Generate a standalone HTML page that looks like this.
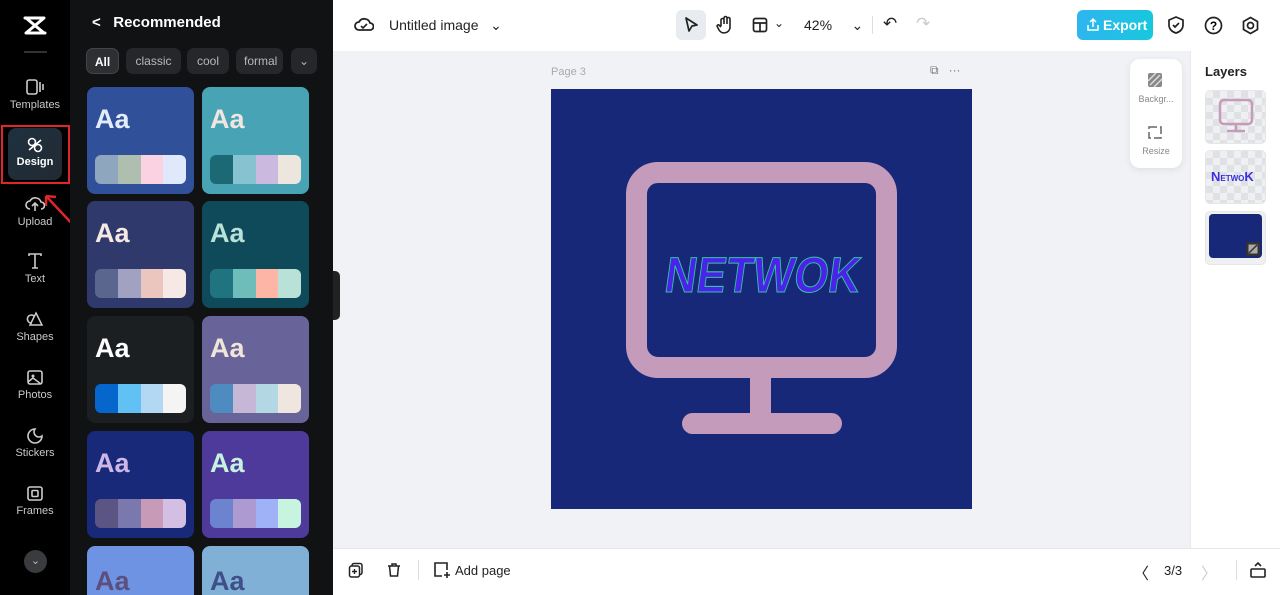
<!DOCTYPE html>
<html style="width:1280px;height:595px;overflow:hidden"><head><meta charset="utf-8"><style>
*{box-sizing:border-box;margin:0;padding:0}
body{width:1280px;height:595px;overflow:hidden;font-family:"Liberation Sans",sans-serif;background:#f0f2f5;position:relative}
.abs{position:absolute}
.side{left:0;top:0;width:70px;height:595px;background:#000}
.nav{position:absolute;left:0;width:70px;text-align:center;color:#c9c9c9;font-size:11px}
.nav svg{display:block;margin:0 auto 3px}
.panel{left:70px;top:0;width:263px;height:595px;background:#111214}
.chip{position:absolute;top:48px;height:26px;border-radius:7px;background:#26272b;color:#b8b8b8;font-size:12px;line-height:26px;text-align:center}
.card{position:absolute;width:107px;height:107px;border-radius:8px;overflow:hidden}
.card .aa{position:absolute;left:8px;top:17px;font-size:27px;font-weight:bold}
.card .pal{position:absolute;left:8px;top:68px;width:91px;height:29px;border-radius:6px;overflow:hidden;display:flex}
.card .pal i{flex:1}
.top{left:333px;top:0;width:947px;height:51px;background:#fff}
.bot{left:333px;top:548px;width:947px;height:47px;background:#fff;border-top:1px solid #e5e7eb}
.right{left:1190px;top:51px;width:90px;height:497px;background:#fff;border-left:1px solid #e8e8e8}
.th{position:absolute;left:1205px;width:61px;height:54px;border-radius:5px;background-color:#eef0f2;
background-image:linear-gradient(45deg,#dfe1e4 25%,transparent 25%,transparent 75%,#dfe1e4 75%),linear-gradient(45deg,#dfe1e4 25%,transparent 25%,transparent 75%,#dfe1e4 75%);background-size:14px 14px;background-position:0 0,7px 7px;border:1px solid #e6e6e6}
</style></head><body>
<div class="abs side"></div>
<svg class="abs" style="left:23px;top:15px" width="24" height="22" viewBox="0 0 24 22"><path d="M2 3h19L3 18h19M3 3l18 15" stroke="#fff" stroke-width="3" fill="none" stroke-linejoin="round" stroke-linecap="round"/></svg>
<div class="abs" style="left:24px;top:51px;width:23px;height:2px;background:#333"></div>
<div class="nav" style="top:78px"><svg width="20" height="18" viewBox="0 0 20 18"><rect x="2" y="2" width="10" height="14" rx="2" stroke="#ccc" stroke-width="1.6" fill="none"/><path d="M15 4v10M18 6v6" stroke="#ccc" stroke-width="1.6"/></svg>Templates</div>
<div class="abs" style="left:1px;top:125px;width:69px;height:59px;border:2px solid #e0262b"></div>
<div class="abs" style="left:8px;top:128px;width:54px;height:52px;border-radius:8px;background:linear-gradient(135deg,#1e3140,#222a33)"></div>
<div class="nav" style="top:137px;color:#fff;font-weight:bold"><svg width="18" height="16" viewBox="0 0 18 16"><circle cx="6" cy="5" r="3.5" stroke="#fff" stroke-width="1.6" fill="none"/><circle cx="12" cy="11" r="3.5" stroke="#fff" stroke-width="1.6" fill="none"/><path d="M3 13l12-10" stroke="#fff" stroke-width="1.6"/></svg>Design</div>
<svg class="abs" style="left:40px;top:188px" width="40" height="44"><path d="M36 40L6 8M6 8l0 10M6 8l10 1" stroke="#e0262b" stroke-width="2.4" fill="none"/></svg>
<div class="nav" style="top:195px"><svg width="20" height="18" viewBox="0 0 20 18"><path d="M5 14a4 4 0 010-8 6 6 0 0111 1 3.5 3.5 0 010 7M10 16V9M7 11l3-3 3 3" stroke="#ccc" stroke-width="1.6" fill="none"/></svg>Upload</div>
<div class="nav" style="top:252px"><svg width="18" height="18" viewBox="0 0 18 18"><path d="M3 4V2h12v2M9 2v14M6 16h6" stroke="#ccc" stroke-width="1.6" fill="none"/></svg>Text</div>
<div class="nav" style="top:311px"><svg width="18" height="17" viewBox="0 0 18 17"><path d="M10 2l6 12H4z M8 5a4 4 0 10-2 7" stroke="#ccc" stroke-width="1.5" fill="none"/></svg>Shapes</div>
<div class="nav" style="top:369px"><svg width="18" height="17" viewBox="0 0 18 17"><rect x="2" y="2" width="14" height="13" rx="2" stroke="#ccc" stroke-width="1.6" fill="none"/><circle cx="7" cy="7" r="1.5" fill="#ccc"/><path d="M2 13l5-4 8 6" stroke="#ccc" stroke-width="1.5" fill="none"/></svg>Photos</div>
<div class="nav" style="top:427px"><svg width="18" height="17" viewBox="0 0 18 17"><path d="M9 2a7 7 0 107 7 5 5 0 01-7-7z" stroke="#ccc" stroke-width="1.6" fill="none"/></svg>Stickers</div>
<div class="nav" style="top:485px"><svg width="18" height="17" viewBox="0 0 18 17"><rect x="2" y="2" width="14" height="13" rx="2" stroke="#ccc" stroke-width="1.6" fill="none"/><rect x="6" y="5.5" width="6" height="6" rx="1" stroke="#ccc" stroke-width="1.6" fill="none"/></svg>Frames</div>
<div class="abs" style="left:24px;top:550px;width:23px;height:23px;border-radius:50%;background:#3a3b3f;color:#bbb;font-size:11px;text-align:center;line-height:23px">⌄</div>

<div class="abs panel"></div>
<div class="abs" style="left:92px;top:14px;color:#fff;font-size:15px;font-weight:bold">&lt;&nbsp;&nbsp;&nbsp;Recommended</div>
<div class="chip" style="left:86px;width:33px;background:#2e2f33;border:1px solid #444;color:#fff;font-weight:bold">All</div>
<div class="chip" style="left:126px;width:55px">classic</div>
<div class="chip" style="left:187px;width:42px">cool</div>
<div class="chip" style="left:236px;width:47px;text-align:left;padding-left:8px;overflow:hidden">formal</div>
<div class="chip" style="left:291px;width:26px">⌄</div>

<div class="card" style="left:87px;top:87px;background:#31509a"><div class="aa" style="color:#e3ecfb">Aa</div><div class="pal"><i style="background:#8ea6be"></i><i style="background:#aebfb0"></i><i style="background:#fbd2e2"></i><i style="background:#e0e9fb"></i></div></div>
<div class="card" style="left:202px;top:87px;background:#48a3b5"><div class="aa" style="color:#efe7df">Aa</div><div class="pal"><i style="background:#1c6875"></i><i style="background:#87c2d0"></i><i style="background:#cbb9e0"></i><i style="background:#ede6df"></i></div></div>
<div class="card" style="left:87px;top:201px;background:#30396b"><div class="aa" style="color:#f6e8e3">Aa</div><div class="pal"><i style="background:#5b668f"></i><i style="background:#a1a2c1"></i><i style="background:#ebc6be"></i><i style="background:#f6e9e5"></i></div></div>
<div class="card" style="left:202px;top:201px;background:#0e4a5a"><div class="aa" style="color:#b9e1d8">Aa</div><div class="pal"><i style="background:#1f7480"></i><i style="background:#6fbdbb"></i><i style="background:#fdb6a6"></i><i style="background:#b8e1d8"></i></div></div>
<div class="card" style="left:87px;top:316px;background:#1b1f22"><div class="aa" style="color:#fff">Aa</div><div class="pal"><i style="background:#0566cd"></i><i style="background:#62c1f4"></i><i style="background:#b3d8f4"></i><i style="background:#f4f4f4"></i></div></div>
<div class="card" style="left:202px;top:316px;background:#68649a"><div class="aa" style="color:#efe5d9">Aa</div><div class="pal"><i style="background:#4d8bc0"></i><i style="background:#c6b7d6"></i><i style="background:#b3d8e3"></i><i style="background:#efe7df"></i></div></div>
<div class="card" style="left:87px;top:431px;background:#18297a"><div class="aa" style="color:#cdb7e4">Aa</div><div class="pal"><i style="background:#5b5584"></i><i style="background:#7a78ac"></i><i style="background:#c79ab8"></i><i style="background:#d3bfe4"></i></div></div>
<div class="card" style="left:202px;top:431px;background:#4e3a9b"><div class="aa" style="color:#c5f3e0">Aa</div><div class="pal"><i style="background:#6c84d0"></i><i style="background:#ad9ad0"></i><i style="background:#9fb2f7"></i><i style="background:#c7f4df"></i></div></div>
<div class="card" style="left:87px;top:546px;height:49px;border-radius:8px 8px 0 0;background:#6f93e3"><div class="aa" style="color:#5a4f7d;top:20px">Aa</div></div>
<div class="card" style="left:202px;top:546px;height:49px;border-radius:8px 8px 0 0;background:#80b0d5"><div class="aa" style="color:#3f4f89;top:20px">Aa</div></div>
<div class="abs" style="left:333px;top:271px;width:7px;height:49px;background:#222;border-radius:0 5px 5px 0"></div>

<div class="abs top"></div>
<svg class="abs" style="left:354px;top:15px" width="20" height="18" viewBox="0 0 20 18"><path d="M5 15a4 4 0 010-8 6 6 0 0111 1 3.5 3.5 0 010 7z" stroke="#222" stroke-width="1.8" fill="none"/><path d="M7 11l2 2 4-4" stroke="#222" stroke-width="1.6" fill="none"/></svg>
<div class="abs" style="left:389px;top:17px;font-size:14px;color:#222">Untitled image&nbsp;&nbsp;&nbsp;⌄</div>
<div class="abs" style="left:676px;top:10px;width:30px;height:30px;border-radius:6px;background:#e8ebef"></div>
<svg class="abs" style="left:683px;top:16px" width="16" height="18"><path d="M3 2l11 7-5 1-3 5z" stroke="#222" stroke-width="1.7" fill="none" stroke-linejoin="round"/></svg>
<svg class="abs" style="left:716px;top:15px" width="18" height="20"><path d="M5 11V5a1.5 1.5 0 013 0v4V3a1.5 1.5 0 013 0v6V4a1.5 1.5 0 013 0v9a6 6 0 01-11 2l-2-4a1.3 1.3 0 012-1l2 2" stroke="#222" stroke-width="1.6" fill="none"/></svg>
<svg class="abs" style="left:752px;top:17px" width="16" height="16"><rect x="1.5" y="1.5" width="13" height="13" rx="2" stroke="#222" stroke-width="1.7" fill="none"/><path d="M1.5 6h13M8 6v8.5" stroke="#222" stroke-width="1.7"/></svg>
<div class="abs" style="left:774px;top:16px;font-size:12px;color:#222">⌄</div>
<div class="abs" style="left:804px;top:17px;font-size:14px;color:#222">42%&nbsp;&nbsp;&nbsp;&nbsp;&nbsp;⌄</div>
<div class="abs" style="left:872px;top:16px;width:1px;height:18px;background:#ddd"></div>
<div class="abs" style="left:883px;top:14px;font-size:17px;color:#222">↶</div>
<div class="abs" style="left:916px;top:14px;font-size:17px;color:#ccc">↷</div>
<div class="abs" style="left:1077px;top:10px;width:76px;height:30px;border-radius:6px;background:linear-gradient(90deg,#2fb5f0,#17c8dd);color:#fff;font-weight:bold;font-size:14px;line-height:30px;padding-left:26px">Export</div>
<svg class="abs" style="left:1086px;top:17px" width="14" height="15"><path d="M2 8v5h10V8M7 10V2M4 5l3-3 3 3" stroke="#fff" stroke-width="1.5" fill="none"/></svg>
<svg class="abs" style="left:1167px;top:15px" width="18" height="20"><path d="M9 2l7 3v5c0 4-3 7-7 8-4-1-7-4-7-8V5z" stroke="#222" stroke-width="1.7" fill="none"/><path d="M6 10l2 2 4-4" stroke="#222" stroke-width="1.7" fill="none"/></svg>
<svg class="abs" style="left:1204px;top:16px" width="19" height="19"><circle cx="9.5" cy="9.5" r="8" stroke="#222" stroke-width="1.7" fill="none"/><text x="9.5" y="14" font-size="12" font-weight="bold" text-anchor="middle" font-family="Liberation Sans">?</text></svg>
<svg class="abs" style="left:1241px;top:16px" width="19" height="19"><path d="M9.5 1.5l7 4v8l-7 4-7-4v-8z" stroke="#222" stroke-width="1.7" fill="none"/><circle cx="9.5" cy="9.5" r="3" stroke="#222" stroke-width="1.7" fill="none"/></svg>

<div class="abs" style="left:551px;top:66px;font-size:11px;color:#aaa">Page 3</div>
<div class="abs" style="left:930px;top:63px;font-size:12px;color:#777">⧉&nbsp;&nbsp;&nbsp;···</div>
<div class="abs" style="left:551px;top:89px;width:421px;height:420px;background:#182878"></div>
<div class="abs" style="left:626px;top:162px;width:271px;height:216px;border:21px solid #c49bba;border-radius:32px"></div>
<div class="abs" style="left:750px;top:377px;width:21px;height:38px;background:#c49bba"></div>
<div class="abs" style="left:682px;top:413px;width:160px;height:21px;background:#c49bba;border-radius:11px"></div>
<svg class="abs" style="left:660px;top:222px" width="205" height="90"><text x="5" y="70" font-family="Liberation Sans" font-size="50" font-weight="bold" fill="#4b22e8" stroke="#2fc7a0" stroke-width="1" textLength="195" lengthAdjust="spacingAndGlyphs" transform="skewX(-8) translate(8,0)">NETWOK</text></svg>

<div class="abs" style="left:1130px;top:59px;width:52px;height:109px;background:#fff;border-radius:10px;box-shadow:0 2px 8px rgba(0,0,0,.08)"></div>
<svg class="abs" style="left:1147px;top:72px" width="16" height="16"><rect x="1" y="1" width="14" height="14" rx="2" fill="#888"/><path d="M3 13L13 3M1 9L9 1M7 15L15 7" stroke="#ddd" stroke-width="1.5"/></svg>
<div class="abs" style="left:1130px;top:94px;width:52px;text-align:center;font-size:9px;color:#888">Backgr...</div>
<svg class="abs" style="left:1147px;top:124px" width="16" height="16"><rect x="2" y="3" width="12" height="11" stroke="#666" stroke-width="1.5" fill="none" stroke-dasharray="8 3"/></svg>
<div class="abs" style="left:1130px;top:146px;width:52px;text-align:center;font-size:9px;color:#888">Resize</div>
<div class="abs right"></div>
<div class="abs" style="left:1205px;top:64px;font-size:13px;font-weight:bold;color:#222">Layers</div>
<div class="th" style="top:90px"></div>
<svg class="abs" style="left:1217px;top:98px" width="38" height="36"><rect x="3" y="2" width="32" height="24" rx="4" stroke="#c49bba" stroke-width="2.5" fill="none"/><path d="M19 26v6M10 33h18" stroke="#c49bba" stroke-width="2.5"/></svg>
<div class="th" style="top:150px"></div>
<div class="abs" style="left:1211px;top:169px;font-size:13px;font-weight:bold;color:#3a2fe0">N<span style="font-size:8px">ETWO</span>K</div>
<div class="abs" style="left:1205px;top:211px;width:61px;height:54px;border-radius:5px;background:#eef0f2;border:1px solid #e6e6e6"></div>
<div class="abs" style="left:1209px;top:214px;width:53px;height:44px;background:#182878;border-radius:4px"></div>
<svg class="abs" style="left:1246px;top:242px" width="14" height="14"><rect width="14" height="14" rx="2" fill="#333"/><rect x="2.5" y="2.5" width="9" height="9" fill="#aaa"/><path d="M3 11l8-8" stroke="#333" stroke-width="1.5"/></svg>

<div class="abs bot"></div>
<svg class="abs" style="left:348px;top:562px" width="16" height="16"><rect x="4" y="1.5" width="10" height="11" rx="2" stroke="#222" stroke-width="1.5" fill="none"/><rect x="1.5" y="4" width="10" height="11" rx="2" stroke="#222" stroke-width="1.5" fill="#fff"/><path d="M6.5 7v5M4 9.5h5" stroke="#222" stroke-width="1.4"/></svg>
<svg class="abs" style="left:386px;top:562px" width="16" height="16"><path d="M2 4h12M6 4V2h4v2M3.5 4l1 10h7l1-10" stroke="#222" stroke-width="1.5" fill="none"/></svg>
<div class="abs" style="left:418px;top:560px;width:1px;height:20px;background:#ddd"></div>
<svg class="abs" style="left:433px;top:561px" width="18" height="18"><path d="M9 15H2V2h12v7" stroke="#222" stroke-width="1.6" fill="none"/><path d="M14 11v6M11 14h6" stroke="#222" stroke-width="1.6"/></svg>
<div class="abs" style="left:455px;top:563px;font-size:13px;color:#222">Add page</div>
<div class="abs" style="left:1133px;top:560px;font-size:16px;color:#222">〈</div>
<div class="abs" style="left:1164px;top:563px;font-size:13px;color:#222">3/3</div>
<div class="abs" style="left:1201px;top:560px;font-size:16px;color:#ccc">〉</div>
<div class="abs" style="left:1236px;top:560px;width:1px;height:20px;background:#ddd"></div>
<svg class="abs" style="left:1249px;top:561px" width="18" height="18"><rect x="2" y="8" width="14" height="8" rx="1" stroke="#222" stroke-width="1.6" fill="none"/><path d="M6 5l3-3 3 3" stroke="#222" stroke-width="1.6" fill="none"/></svg>
</body></html>
